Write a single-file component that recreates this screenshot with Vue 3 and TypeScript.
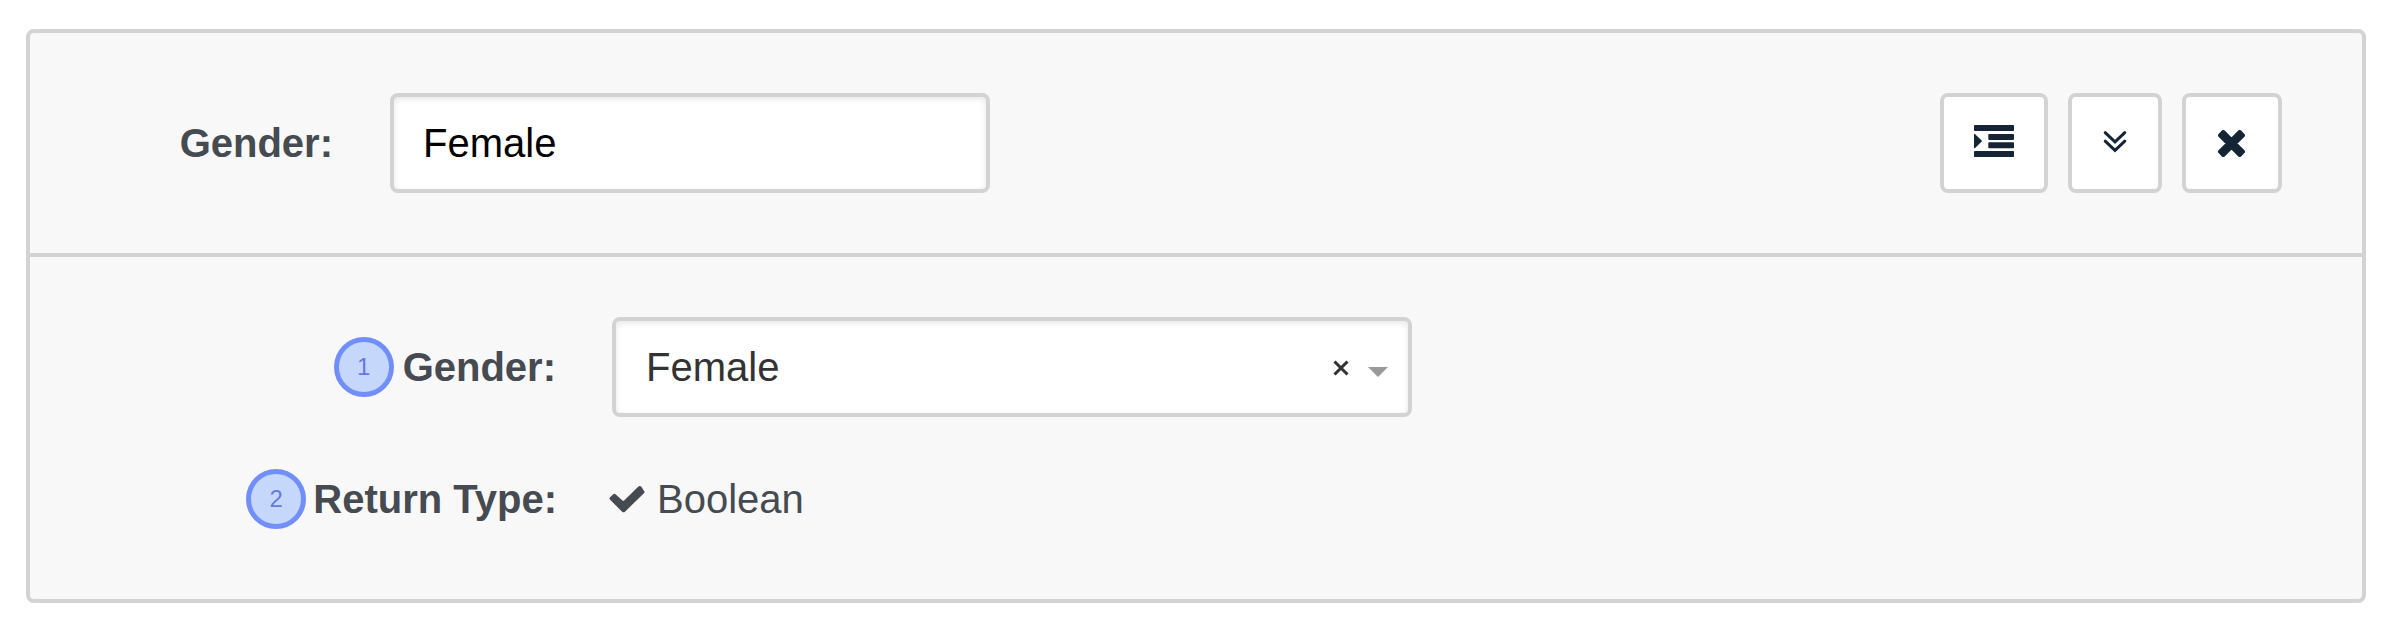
<script setup lang="ts">
import { ref } from 'vue'

const name = ref<string>('Female')
const selected = ref<string>('Female')
</script>

<template>
  <main class="page">
    <section class="card">
      <header class="card-header">
        <label class="name-label" for="name">Gender:</label>
        <input id="name" v-model="name" class="name-input" type="text" />
        <div class="actions">
          <button class="btn indent" type="button" aria-label="Indent">
            <svg width="40" height="32" viewBox="0 0 40 32" fill="currentColor">
              <rect width="40" height="6" rx="0.8" />
              <rect x="14.3" y="8.9" width="25.7" height="6" rx="0.8" />
              <rect x="14.3" y="17.3" width="25.7" height="6" rx="0.8" />
              <rect y="26" width="40" height="6" rx="0.8" />
              <path d="M0 9.6Q0 8.3 1.1 9.2L7.7 15.4Q8.3 16 7.7 16.6L1.1 22.9Q0 23.7 0 22.5Z" />
            </svg>
          </button>
          <button class="btn expand" type="button" aria-label="Expand">
            <svg width="24" height="24" viewBox="0 0 24 24" fill="none" stroke="currentColor" stroke-width="3" stroke-linecap="round">
              <path d="M2.2 2.7L12 11.9L21.8 2.7M2.2 11.2L12 20.4L21.8 11.2" />
            </svg>
          </button>
          <button class="btn remove" type="button" aria-label="Remove">
            <svg width="27" height="27" viewBox="0 0 27 27" fill="currentColor" stroke="currentColor" stroke-width="4" stroke-linejoin="round">
              <path
                d="M5.3 2L13.5 10.2L21.7 2L25 5.3L16.8 13.5L25 21.7L21.7 25L13.5 16.8L5.3 25L2 21.7L10.2 13.5L2 5.3Z"
              />
            </svg>
          </button>
        </div>
      </header>

      <div class="card-body">
        <div class="row select-row">
          <div class="row-label">
            <span class="badge">1</span>
            <span class="label-text">Gender:</span>
          </div>
          <div class="select" role="combobox">
            <span class="value">{{ selected }}</span>
            <svg class="clear" width="16" height="16" viewBox="0 0 16 16" fill="none" stroke="currentColor" stroke-width="3.1">
              <path d="M1.5 1.5L14.5 14.5M14.5 1.5L1.5 14.5" />
            </svg>
            <svg class="caret" width="20" height="10" viewBox="0 0 20 10" fill="#999">
              <path d="M0 0H20L10 10Z" />
            </svg>
          </div>
        </div>
        <div class="row type-row">
          <div class="row-label">
            <span class="badge">2</span>
            <span class="label-text">Return Type:</span>
          </div>
          <div class="type">
            <svg class="check" width="36" height="28" viewBox="0 0 36 28" fill="currentColor">
              <path
                d="M34.9 5.8Q36.1 7 34.9 8.3L16 26.7Q14.5 28 13.1 26.7L1.1 14.8Q0 13.4 1.1 12.2L4 9.4Q5.4 8.2 6.8 9.4L13.2 15.3Q14.3 16.3 15.4 15.3L29.4 1.6Q30.8 0.5 32.2 1.6Z"
              />
            </svg>
            <span>Boolean</span>
          </div>
        </div>
      </div>
    </section>
  </main>
</template>

<style>
body {
  margin: 0;
  background: #fff;
}
</style>

<style scoped>
.page {
  box-sizing: border-box;
  height: 622px;
  padding: 29px 28px 19px 26px;
  font: 40px/46px "Liberation Sans", Arial, sans-serif;
  color: #464a51;
}
.card {
  box-sizing: border-box;
  height: 574px;
  border: 4px solid #d3d3d3;
  border-radius: 8px;
  background: #f8f8f8;
}
.card-header {
  display: flex;
  box-sizing: border-box;
  height: 224px;
  align-items: center;
  padding: 0 80px 0 60px;
  border-bottom: 4px solid #d3d3d3;
}
.name-label {
  width: 243px;
  margin-right: 57px;
  text-align: right;
  font-weight: bold;
}
.name-input,
.select {
  box-sizing: border-box;
  height: 100px;
  border: 4px solid #d3d3d3;
  border-radius: 8px;
  background: #fff;
  box-shadow: inset 0 2px 6px rgba(0, 0, 0, 0.1);
}
.name-input {
  width: 600px;
  padding: 0 29px;
  font: inherit;
  color: #000;
  outline: none;
}
.actions {
  display: flex;
  gap: 20px;
  margin-left: auto;
}
.btn {
  display: flex;
  box-sizing: border-box;
  height: 100px;
  align-items: center;
  justify-content: center;
  padding: 0;
  border: 4px solid #d3d3d3;
  border-radius: 8px;
  background: #fff;
  color: #152536;
}
.indent {
  width: 108px;
  padding-bottom: 4px;
}
.expand {
  width: 94px;
  padding-bottom: 2px;
}
.remove {
  width: 100px;
  padding-top: 1px;
  padding-right: 1px;
}
.card-body {
  padding-top: 60px;
}
.row {
  display: flex;
  align-items: center;
}
.row-label {
  display: flex;
  width: 527px;
  margin-right: 55px;
  align-items: center;
  justify-content: flex-end;
  gap: 7px;
  font-weight: bold;
}
.select-row .row-label {
  width: 526px;
  margin-right: 56px;
  gap: 9px;
}
.badge {
  display: flex;
  box-sizing: border-box;
  width: 60px;
  height: 60px;
  align-items: center;
  justify-content: center;
  border: 5px solid #728ff9;
  border-radius: 50%;
  background: #c5d8fc;
  color: #6679df;
  font-size: 24px;
  font-weight: normal;
  line-height: 28px;
}
.select {
  display: flex;
  width: 800px;
  align-items: center;
  padding: 0 20px 0 30px;
  color: #333;
}
.value {
  flex: 1;
}
.clear {
  margin: 2px 19px 0 0;
}
.caret {
  margin-top: 10px;
}
.type-row {
  height: 60px;
  margin-top: 52px;
}
.type {
  display: flex;
  align-items: center;
  gap: 12px;
  margin-left: -3px;
}
</style>
